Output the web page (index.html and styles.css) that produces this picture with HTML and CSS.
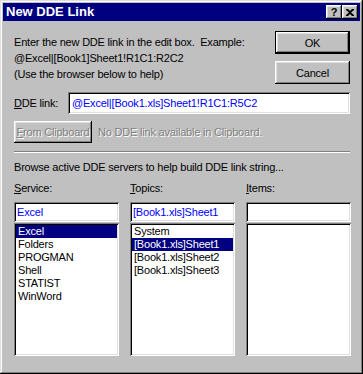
FILE: index.html
```html
<!DOCTYPE html>
<html lang="en">
<head>
  <meta charset="UTF-8" />
  <title>New DDE Link</title>
  <link rel="stylesheet" href="styles.css">
</head>
<body>

  <div class="window">
    <div class="titlebar">
      <span class="title">New DDE Link</span>
      <div class="title-buttons">
        <span class="tbtn help">?</span>
        <span class="tbtn close">
          <svg width="8" height="7" viewBox="0 0 8 7"><path d="M0 0h2l2 2 2-2h2v1L5 3.5 8 6v1H6L4 5 2 7H0V6l3-2.5L0 1z" fill="#000"/></svg>
        </span>
      </div>
    </div>

    <div class="content">
      <div class="top">
        <div class="intro">
          <p>Enter the new DDE link in the edit box.&nbsp; Example:</p>
          <p>@Excel|[Book1]Sheet1!R1C1:R2C2</p>
          <p>(Use the browser below to help)</p>
        </div>
        <div class="actions">
          <button class="btn default">OK</button>
          <button class="btn">Cancel</button>
        </div>
      </div>

      <div class="link-row">
        <label class="link-label"><u>D</u>DE link:</label>
        <div class="field link-field">@Excel|[Book1.xls]Sheet1!R1C1:R5C2</div>
      </div>

      <div class="clip-row">
        <button class="btn clip" disabled><u>F</u>rom Clipboard</button>
        <span class="muted">No DDE link available in Clipboard.</span>
      </div>

      <div class="separator"></div>

      <p class="browse">Browse active DDE servers to help build DDE link string...</p>

      <div class="browser">
        <div class="col">
          <label class="col-label"><u>S</u>ervice:</label>
          <div class="field combo">Excel</div>
          <ul class="field list">
            <li class="selected">Excel</li>
            <li>Folders</li>
            <li>PROGMAN</li>
            <li>Shell</li>
            <li>STATIST</li>
            <li>WinWord</li>
          </ul>
        </div>
        <div class="col">
          <label class="col-label"><u>T</u>opics:</label>
          <div class="field combo">[Book1.xls]Sheet1</div>
          <ul class="field list">
            <li>System</li>
            <li class="selected">[Book1.xls]Sheet1</li>
            <li>[Book1.xls]Sheet2</li>
            <li>[Book1.xls]Sheet3</li>
          </ul>
        </div>
        <div class="col">
          <label class="col-label"><u>I</u>tems:</label>
          <div class="field combo"></div>
          <ul class="field list"></ul>
        </div>
      </div>
    </div>
  </div>

</body>
</html>
```

FILE: styles.css
```css
* { margin: 0; padding: 0; box-sizing: border-box; }
body {
  font-family: "Liberation Sans", Arial, sans-serif;
  font-size: 11px;
  line-height: 16px;
  letter-spacing: -0.2px;
  color: #000;
  background: #c0c0c0;
}
u { text-decoration: underline; text-underline-offset: 1px; }

.window {
  width: 363px;
  height: 374px;
  padding: 3px;
  background: #c0c0c0;
  box-shadow: inset -1px -1px #000, inset 1px 1px #dfdfdf,
              inset -2px -2px #808080, inset 2px 2px #fff;
}

.titlebar {
  height: 18px;
  background: #000080;
  display: flex;
  align-items: center;
  justify-content: space-between;
  padding: 0 2px 0 3px;
}
.title { color: #fff; font-weight: bold; font-size: 13px; letter-spacing: 0; }
.title-buttons { display: flex; }
.tbtn {
  width: 16px; height: 14px;
  background: #c0c0c0;
  display: flex; align-items: center; justify-content: center;
  font-weight: bold; font-size: 11px; line-height: 14px;
  letter-spacing: 0;
  box-shadow: inset -1px -1px #000, inset 1px 1px #fff,
              inset -2px -2px #808080, inset 2px 2px #dfdfdf;
}

.content { padding: 0 10px 0 11px; }

.top {
  display: flex;
  justify-content: space-between;
  margin-top: 10px;
}
.intro { padding-top: 3px; }
.actions {
  display: flex;
  flex-direction: column;
  gap: 7px;
}

.btn {
  font-family: inherit;
  font-size: 11px;
  letter-spacing: inherit;
  width: 75px;
  height: 23px;
  background: #c0c0c0;
  border: none;
  color: #000;
  box-shadow: inset -1px -1px #000, inset 1px 1px #fff,
              inset -2px -2px #808080, inset 2px 2px #dfdfdf;
}
.btn.default {
  box-shadow: inset 0 0 0 1px #000, inset -2px -2px #000, inset 2px 2px #fff,
              inset -3px -3px #808080, inset 3px 3px #dfdfdf;
}

.field {
  background: #fff;
  box-shadow: inset 1px 1px #808080, inset -1px -1px #fff,
              inset 2px 2px #000, inset -2px -2px #dfdfdf;
}

.link-row {
  display: flex;
  align-items: center;
  margin-top: 8px;
}
.link-label { width: 54px; }
.link-field {
  flex: 1;
  height: 22px;
  padding: 3px 4px;
  color: #0000ff;
}

.clip-row {
  display: flex;
  align-items: center;
  gap: 6px;
  margin-top: 7px;
}
.btn.clip {
  width: 78px;
  height: 22px;
  padding: 0;
  color: #808080;
  text-shadow: 1px 1px #fff;
}
.muted { color: #808080; text-shadow: 1px 1px #fff; }

.separator {
  height: 2px;
  margin-top: 8px;
  border-top: 1px solid #808080;
  border-bottom: 1px solid #fff;
}

.browse { margin-top: 6px; }

.browser {
  display: grid;
  grid-template-columns: repeat(3, 105px);
  column-gap: 11px;
  margin-top: 5px;
}
.col { display: flex; flex-direction: column; }
.col-label { height: 16px; margin-bottom: 6px; }
.combo {
  height: 20px;
  padding: 2px 3px;
  color: #0000ff;
}
.list {
  list-style: none;
  height: 133px;
  margin-top: 1px;
  padding: 2px;
}
.list li {
  height: 13px;
  line-height: 13px;
  padding-left: 2px;
  white-space: nowrap;
}
.list li.selected { background: #000080; color: #fff; }
```
